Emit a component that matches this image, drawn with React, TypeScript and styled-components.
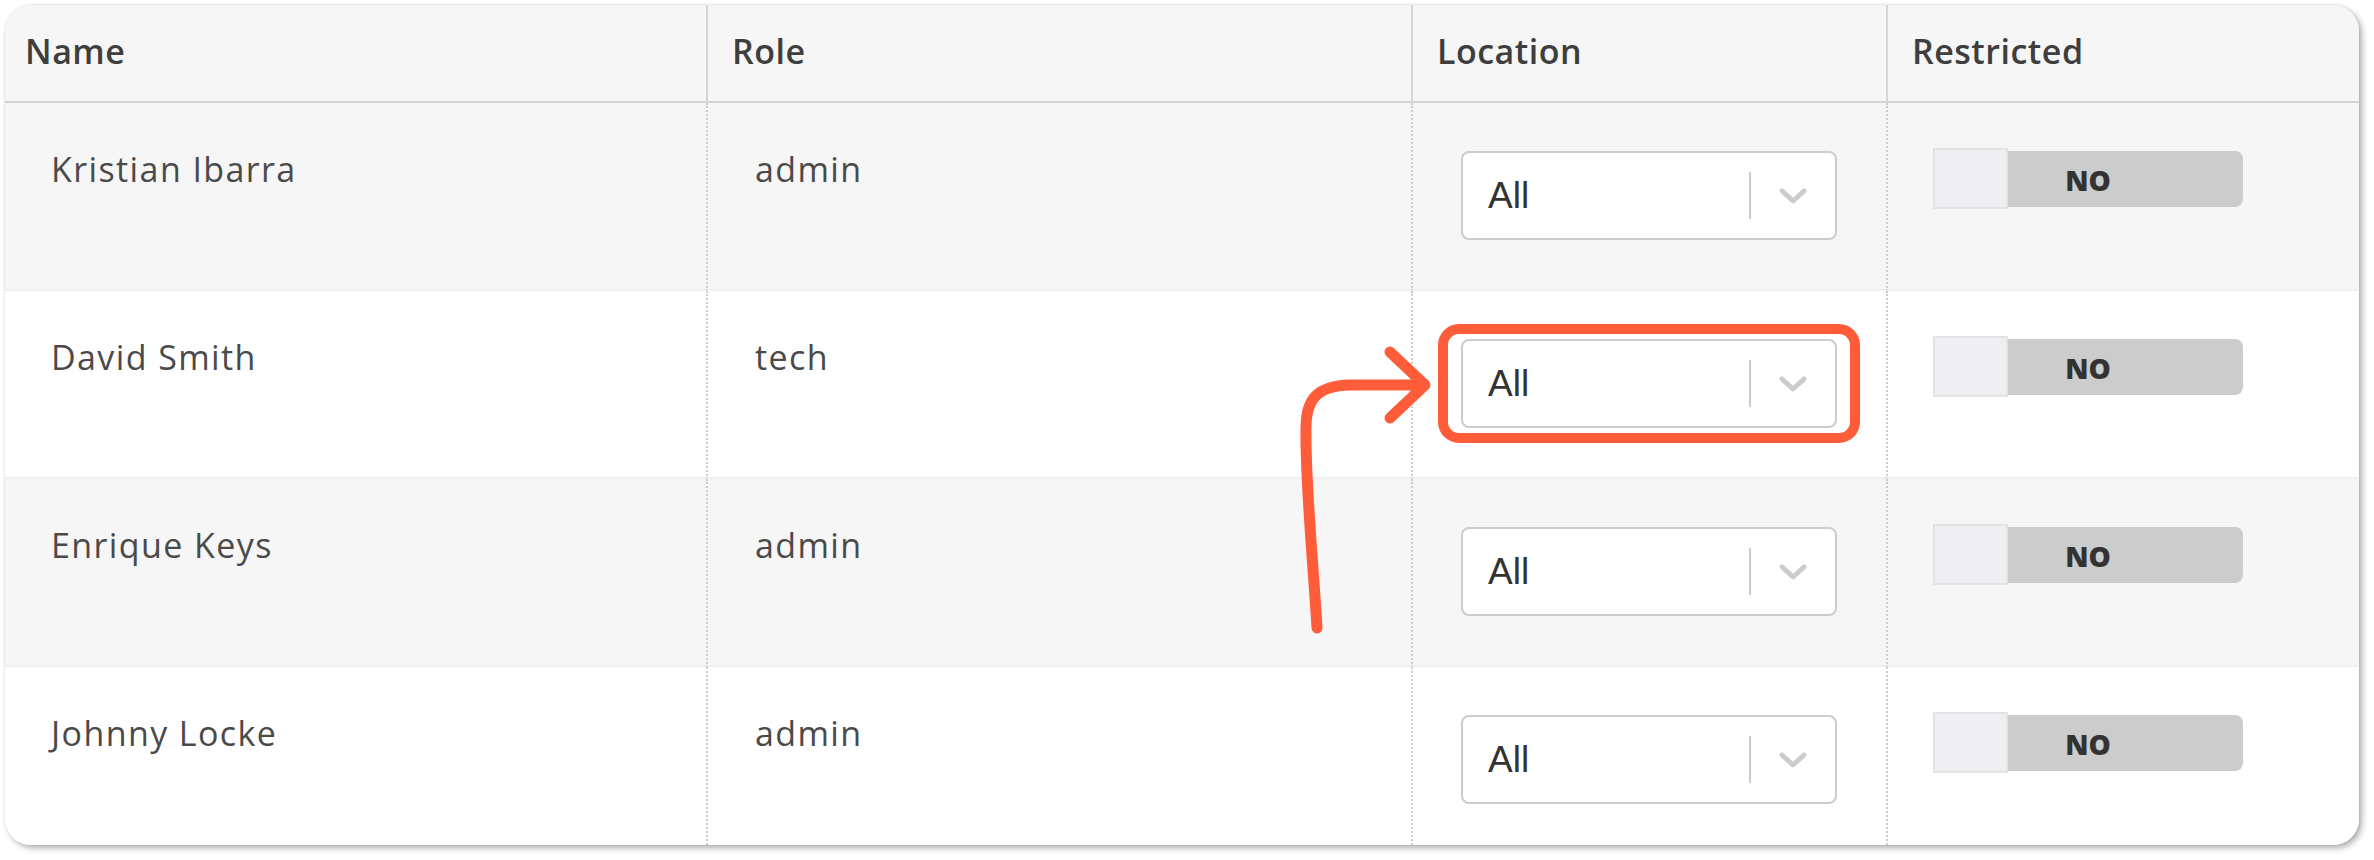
import React from "react";
import styled, { createGlobalStyle } from "styled-components";

const GlobalStyle = createGlobalStyle`
  html, body { margin: 0; padding: 0; background: #ffffff; }
  body { font-family: "Open Sans", "Liberation Sans", sans-serif; }
  * { box-sizing: border-box; }
`;

const Page = styled.div`
  position: relative;
  width: 2374px;
  height: 860px;
  padding: 5px 0 0 5px;
`;

const Card = styled.div`
  width: 2354px;
  height: 840px;
  border-radius: 26px;
  overflow: hidden;
  background: #ffffff;
  box-shadow: 3px 3px 6px rgba(0, 0, 0, 0.32), 0 0 2px rgba(0, 0, 0, 0.12);
  display: grid;
  grid-template-columns: 701px 705px 475px 1fr;
  grid-template-rows: 98px 188px 188px 188px 1fr;
`;

const HeadCell = styled.div<{ $first?: boolean }>`
  background: #f6f6f6;
  border-bottom: 2px solid #d3d3d3;
  border-left: ${(p) => (p.$first ? "none" : "2px solid #d6d6d6")};
  display: flex;
  align-items: center;
  padding: 0 0 4px ${(p) => (p.$first ? "20px" : "24px")};
  font-size: 34px;
  font-weight: 600;
  letter-spacing: 0.5px;
  color: #3e3e3e;
`;

const Cell = styled.div<{ $first?: boolean; $alt: boolean; $last?: boolean; $pad: string }>`
  background: ${(p) => (p.$alt ? "#f6f6f6" : "#ffffff")};
  border-bottom: ${(p) => (p.$last ? "none" : "2px solid #efefef")};
  border-left: ${(p) => (p.$first ? "none" : "2px dotted #cccccc")};
  padding: ${(p) => p.$pad};
`;

const CellText = styled.div`
  font-size: 34px;
  line-height: 48px;
  font-weight: 400;
  letter-spacing: 1.4px;
  color: #4a4a4a;
`;

const Select = styled.div`
  width: 376px;
  height: 89px;
  border: 2px solid #cccccc;
  border-radius: 8px;
  background: #ffffff;
  display: flex;
  align-items: center;
`;

const SelectValue = styled.div`
  flex: 1;
  padding-left: 25px;
  font-family: "Liberation Sans", Arial, sans-serif;
  font-size: 37px;
  color: #333333;
`;

const SelectDivider = styled.div`
  width: 2px;
  height: 47px;
  background: #cccccc;
`;

const SelectArrow = styled.div`
  width: 84px;
  display: flex;
  align-items: center;
  justify-content: center;
`;

const Toggle = styled.div`
  position: relative;
  width: 310px;
  height: 61px;
  display: flex;
  align-items: center;
`;

const Track = styled.div`
  width: 100%;
  height: 56px;
  background: #cccccc;
  border-radius: 8px;
  display: flex;
  align-items: center;
  justify-content: center;
  font-family: "Open Sans", "Liberation Sans", sans-serif;
  font-weight: 800;
  font-size: 28px;
  color: #333333;
  padding-top: 2px;
`;

const Knob = styled.div`
  position: absolute;
  left: 0;
  top: 0;
  width: 75px;
  height: 61px;
  background: #efeff3;
  border: 2px solid #e3e3e3;
`;

const Annotation = styled.svg`
  position: absolute;
  left: 0;
  top: 0;
  pointer-events: none;
`;

const rows = [
  { name: "Kristian Ibarra", role: "admin" },
  { name: "David Smith", role: "tech" },
  { name: "Enrique Keys", role: "admin" },
  { name: "Johnny Locke", role: "admin" },
];

const Chevron = () => (
  <svg width="30" height="18" viewBox="0 0 30 18">
    <polyline
      points="4,4 15,14 26,4"
      fill="none"
      stroke="#cccccc"
      strokeWidth="5"
      strokeLinecap="round"
      strokeLinejoin="round"
    />
  </svg>
);

export default function App() {
  return (
    <>
      <GlobalStyle />
      <Page>
        <Card>
          <HeadCell $first>Name</HeadCell>
          <HeadCell>Role</HeadCell>
          <HeadCell>Location</HeadCell>
          <HeadCell>Restricted</HeadCell>
          {rows.map((r, i) => {
            const alt = i % 2 === 0;
            const last = i === rows.length - 1;
            return (
              <React.Fragment key={r.name}>
                <Cell $first $alt={alt} $last={last} $pad="42px 0 0 46px">
                  <CellText>{r.name}</CellText>
                </Cell>
                <Cell $alt={alt} $last={last} $pad="42px 0 0 47px">
                  <CellText>{r.role}</CellText>
                </Cell>
                <Cell $alt={alt} $last={last} $pad="48px 0 0 48px">
                  <Select>
                    <SelectValue>All</SelectValue>
                    <SelectDivider />
                    <SelectArrow>
                      <Chevron />
                    </SelectArrow>
                  </Select>
                </Cell>
                <Cell $alt={alt} $last={last} $pad="45px 0 0 45px">
                  <Toggle>
                    <Track>NO</Track>
                    <Knob />
                  </Toggle>
                </Cell>
              </React.Fragment>
            );
          })}
        </Card>
        <Annotation width="2374" height="860" viewBox="0 0 2374 860">
          <rect
            x="1443"
            y="329"
            width="412"
            height="109"
            rx="16"
            fill="none"
            stroke="#ff5c3a"
            strokeWidth="10"
          />
          <path
            d="M1317 628 C1313 560 1305 480 1306 428 C1306 398 1318 386 1350 385 L1424 385"
            fill="none"
            stroke="#ff5c3a"
            strokeWidth="11"
            strokeLinecap="round"
            strokeLinejoin="round"
          />
          <path
            d="M1390 352 L1425 385 L1390 418"
            fill="none"
            stroke="#ff5c3a"
            strokeWidth="11"
            strokeLinecap="round"
            strokeLinejoin="round"
          />
        </Annotation>
      </Page>
    </>
  );
}
